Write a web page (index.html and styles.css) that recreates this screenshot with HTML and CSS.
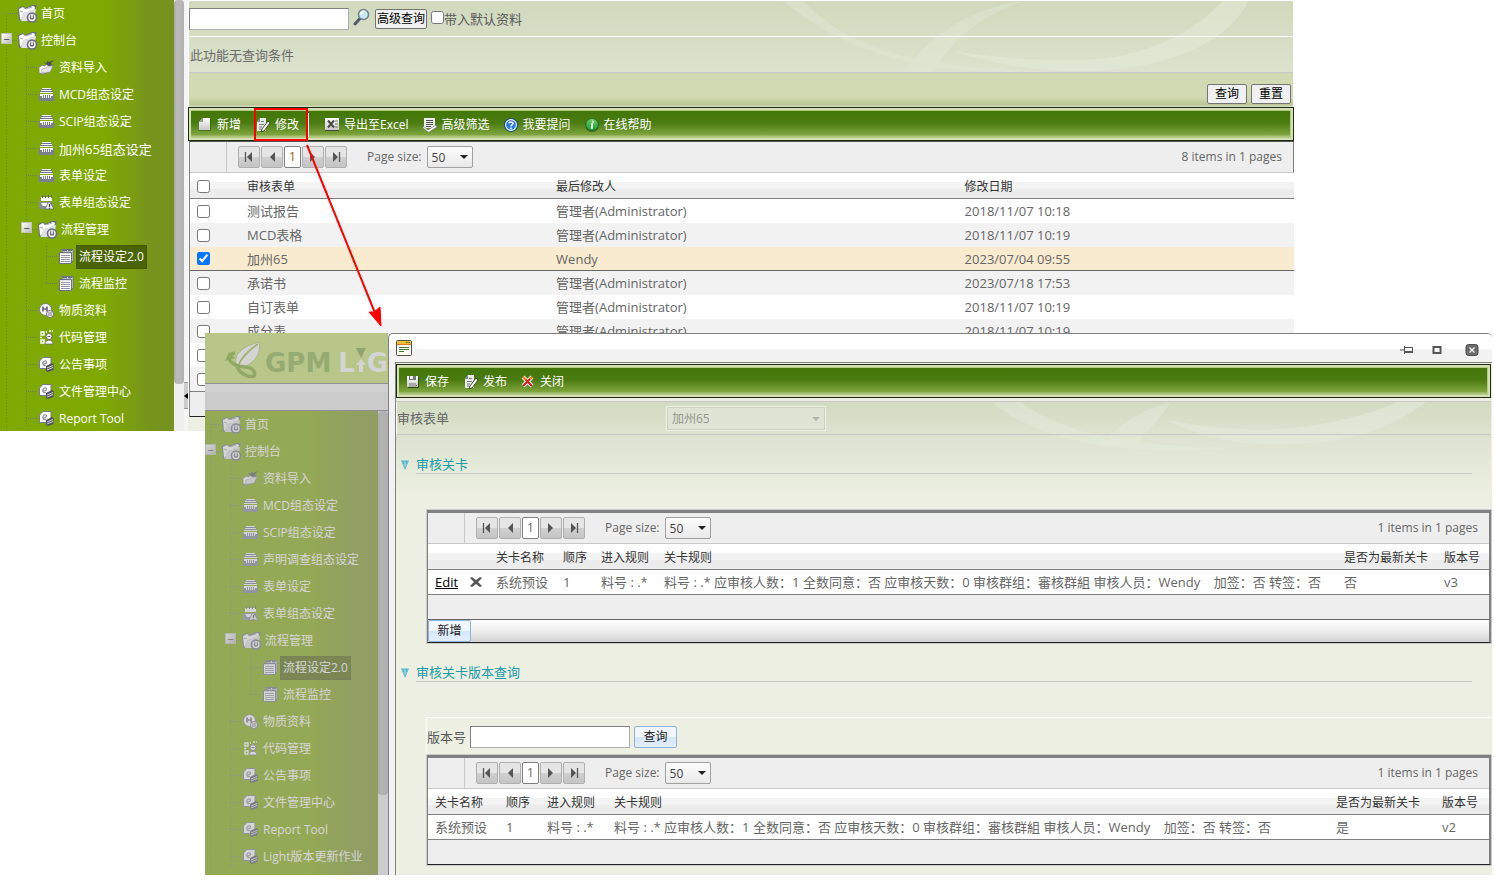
FILE: index.html
```html
<!DOCTYPE html>
<html lang="zh-CN">
<head>
<meta charset="utf-8">
<title>流程设定</title>
<link rel="stylesheet" href="styles.css">
</head>
<body>
<svg class="sprite" aria-hidden="true">
  <defs>
    <linearGradient id="silver" x1="0" y1="0" x2="0" y2="1"><stop offset="0" stop-color="#fff"/><stop offset="1" stop-color="#c9c9c9"/></linearGradient>
    <linearGradient id="blue" x1="0" y1="0" x2="0" y2="1"><stop offset="0" stop-color="#1d62c8"/><stop offset="1" stop-color="#2f8cf0"/></linearGradient>
    <linearGradient id="green" x1="0" y1="0" x2="0" y2="1"><stop offset="0" stop-color="#6fcf6a"/><stop offset="1" stop-color="#12a02a"/></linearGradient>
    <symbol id="i-folder" viewBox="0 0 20 18"><path d="M0 3l5-2 2 2 7-3h5l-2 6 1 9H3l-2 1z" fill="#6c7180"/><path d="M1 4l4-2 2 2 8-3 2 1-1 4-10 2-3 7-1-1z" fill="#fff"/><path d="M5 8l5-1 2-2 6-1-2 12-13 0z" fill="#dfe1e6"/><path d="M2 6l3 1M8 4l6-2" stroke="#a9adb8"/><circle cx="14" cy="12.500" r="5.300" fill="#6c6b80"/><circle cx="14" cy="12.500" r="3" fill="none" stroke="#fff" stroke-width="1.300"/><path d="M14 8.500v4.500" stroke="#6c6b80" stroke-width="3"/><path d="M14 9v4" stroke="#fff" stroke-width="1.500"/></symbol>
    <symbol id="i-import" viewBox="0 0 15 15"><path d="M0 7l4-2 1 1 4-2 1 2 4-1-3 7-8 2-3-1z" fill="#fff" stroke="#6d6f86" stroke-width=".8"/><path d="M3 9l4-1 1-1 6-1-3 6-9 1z" fill="#e4e6ea" stroke="#8a8d9e" stroke-width=".5"/><path d="M5 2l4 4 4-1-1-2 3-3-5 2-2-1v2z" fill="#4d4d60"/></symbol>
    <symbol id="i-drawer" viewBox="0 0 15 15"><path d="M3 1h9v1H3zM2 3h11v1H2zM1 5h13v1H1z" fill="#fff"/><path d="M2 2h11v1H2zM1 4h13v1H1z" fill="#6c7590"/><path d="M0 7h15v7H0z" fill="#7a8090"/><path d="M1 7h13v2h-2v2H3V9H1z" fill="#fff"/><path d="M4.500 8v3M6.500 8v3M8.500 8v3M10.500 8v3" stroke="#7a8090"/></symbol>
    <symbol id="i-formset" viewBox="0 0 15 15"><path d="M2 2h11v4H2z" fill="#fff"/><path d="M3.500 0v3M6.500 0v3M9.500 0v3M12.500 0v3" stroke="#5f6678"/><path d="M1 7h12l1 3v4H0V9z" fill="#868c9c"/><path d="M2 8h9v3H4z" fill="#fff"/><path d="M10 6l5 8H6z" fill="#eceef4" stroke="#666b80" stroke-width=".8"/><path d="M10.500 9v3M10.500 12.700v1" stroke="#444" stroke-width="1.200"/></symbol>
    <symbol id="i-form" viewBox="0 0 15 15"><path d="M2 .500h12v12h-2" fill="#eef0f3" stroke="#6c6f88"/><path d="M.500 3.500h12v11H.500z" fill="#fff" stroke="#6c6f88"/><path d="M1 3.500h11M3 1.500h10" stroke="#6c6f88" stroke-width="1.500" stroke-dasharray="5 1"/><path d="M2 6.500h9M2 8.500h9M2 10.500h9M2 12.500h9" stroke="#9297aa"/></symbol>
    <symbol id="i-matter" viewBox="0 0 15 15"><circle cx="6.500" cy="6.500" r="6" fill="#fff" stroke="#74798c"/><path d="M4 3.500v5M8 3.500v5M4 6H8" stroke="#6c6b80" stroke-width="1.700"/><circle cx="11" cy="11" r="3.500" fill="#fff" stroke="#6c6b80"/><path d="M9 10h4M9 12h4" stroke="#6c6b80"/></symbol>
    <symbol id="i-code" viewBox="0 0 15 15"><path d="M2 2h3v3H2zM2 10h3v3H2z" fill="none" stroke="#fff" stroke-width="1.400"/><path d="M7 2h1M10 1h4M1 7.500h3" stroke="#fff" stroke-width="1.500" stroke-dasharray="2 1"/><circle cx="10" cy="6.500" r="3" fill="#fff" stroke="#6c6b80"/><path d="M6 14c0-5 8-5 8 0z" fill="#fff" stroke="#6c6b80" stroke-width=".8"/><path d="M8.500 6.500h3" stroke="#6c6b80"/></symbol>
    <symbol id="i-doc" viewBox="0 0 15 15"><path d="M4 .5h8v11H.5V4z" fill="#fff" stroke="#777d94"/><path d="M4 7c5 0 4-4 1.500-3C3 5 3 9.500 7 8.500" fill="none" stroke="#9297a6" stroke-width="1.200"/><path d="M7 9l6-3 1.500 1v6l-6 2-1.500-1z" fill="#4f4f60"/><path d="M8 11l6-2.500M8 13l6-2.500" stroke="#e4e4ea" stroke-width=".9"/></symbol>
    <symbol id="i-new" viewBox="0 0 14 14"><path d="M5 1h8v12H1V5z" fill="#2b4d08" opacity=".5"/><path d="M5 0h7v12H1V4z" fill="url(#silver)"/><path d="M5 0v4H1z" fill="#999"/></symbol>
    <symbol id="i-edit" viewBox="0 0 14 14"><path d="M4 0h6v13H1V4z" fill="#e9e9e9"/><path d="M4 0v4H1z" fill="#888"/><path d="M5 3.500h3M3 6.500h5M3 9h3M3 11h2" stroke="#777"/><path d="M12 3l2 2-6 8-3 1 1-3z" fill="#fff" stroke="#294409" stroke-width=".9"/></symbol>
    <symbol id="i-excel" viewBox="0 0 14 14"><path d="M0 1h14v12H0z" fill="#3f4a35"/><path d="M0 0h14v12H0z" fill="url(#silver)"/><path d="M3 2.500l6 7M9 2.500l-6 7" stroke="#4a4a4a" stroke-width="2"/><path d="M10 3h3M10 6h3M10 9h3" stroke="#777"/></symbol>
    <symbol id="i-filter" viewBox="0 0 14 14"><path d="M1 0h11v10H1z" fill="#eee"/><path d="M3 2.500h7M3 4.500h7M3 6.500h7M3 8.500h5" stroke="#4d554a"/><path d="M0 8l5 4 8-5 1 2-8 5H5L0 10z" fill="#fff" stroke="#555" stroke-width=".5"/></symbol>
    <symbol id="i-ask" viewBox="0 0 14 14"><circle cx="7" cy="7" r="7" fill="#164b86"/><circle cx="7" cy="7" r="5.400" fill="url(#blue)" stroke="#fff" stroke-width="1.100"/><path d="M5 5.500C5 3.500 9 3.500 9 5.500 9 7 7 6.800 7 8.500M7 9.500V11" fill="none" stroke="#fff" stroke-width="1.500"/></symbol>
    <symbol id="i-info" viewBox="0 0 14 14"><circle cx="7" cy="7" r="7" fill="#2d6b20"/><circle cx="7" cy="6.500" r="5.800" fill="url(#green)"/><path d="M6 6h1.500L6.500 10H8" fill="none" stroke="#fff" stroke-width="1.500"/><circle cx="8" cy="3.700" r="1" fill="#fff"/></symbol>
    <symbol id="i-save" viewBox="0 0 14 14"><path d="M2 2h11v11H2z" fill="#2c4b0b"/><path d="M1 1h11v11H1z" fill="url(#silver)"/><path d="M3 1h7v4H3z" fill="#777"/><path d="M4 1h3v3H4z" fill="#eee"/><path d="M3 8h7v4H3z" fill="#aaa"/><path d="M10 10h1v1h-1z" fill="#555"/></symbol>
    <symbol id="i-close" viewBox="0 0 14 14"><path d="M2 2l9 9M11 2l-9 9" stroke="#fff" stroke-width="4"/><path d="M2 2l9 9M11 2l-9 9" stroke="#d42222" stroke-width="2.200"/><path d="M2 2l3 3M11 2l-2 2" stroke="#f08a1c" stroke-width="2"/></symbol>
    <symbol id="i-search" viewBox="0 0 18 18"><path d="M7 10.500L2 16" stroke="#555b66" stroke-width="3" stroke-linecap="round"/><circle cx="10.500" cy="6.500" r="5" fill="#cbe6f5" stroke="#70808e" stroke-width="1.500"/><path d="M7.500 6a3 3 0 0 1 4-2.500" stroke="#fff" stroke-width="1.500" fill="none"/></symbol>
    <symbol id="i-first" viewBox="0 0 10 10"><path d="M1.500 0v10" stroke="#555" stroke-width="1.300"/><path d="M8 0v10L3 5z" fill="#555"/></symbol>
    <symbol id="i-prev" viewBox="0 0 10 10"><path d="M8 0v10L3 5z" fill="#555"/></symbol>
    <symbol id="i-next" viewBox="0 0 10 10"><path d="M2 0v10l5-5z" fill="#555"/></symbol>
    <symbol id="i-last" viewBox="0 0 10 10"><path d="M8.500 0v10" stroke="#555" stroke-width="1.300"/><path d="M2 0v10l5-5z" fill="#555"/></symbol>
    <symbol id="i-caret" viewBox="0 0 8 10"><path d="M0 .5h8L4 10z" fill="#5bb5c8"/><path d="M1.500 1.500h5L4 8z" fill="#c4eef2"/><path d="M4 1v7M2.500 1v3M5.500 1v3" stroke="#3aa6bd" stroke-width=".8"/></symbol>
    <symbol id="i-window" viewBox="0 0 16 16"><rect x=".5" y=".5" width="15" height="15" rx="1" fill="#fdfdf6" stroke="#5c5148"/><path d="M1 1h14v4H1z" fill="#f3bd3c"/><path d="M1 4.500h14" stroke="#d97b22"/><path d="M10 2.500h1.500M12.500 2.500H14" stroke="#3c6c1d"/><path d="M3 7.500h10M3 9.500h10M3 11.500h5" stroke="#3f7a3c"/></symbol>
    <symbol id="i-pin" viewBox="0 0 14 12"><path d="M0 6h4M4.500 2v8M5 3.500h7.500V8" stroke="#555" fill="none"/><path d="M5 7h8v2H5z" fill="#555"/></symbol>
    <symbol id="i-max" viewBox="0 0 14 12"><path d="M3.500 3h7v6h-7z" fill="#fff" stroke="#555" stroke-width="2"/></symbol>
    <symbol id="i-quit" viewBox="0 0 14 12"><rect x="1" y=".5" width="12" height="11" rx="2.500" fill="#6c6c6c" stroke="#4d4d4d"/><path d="M4.500 3.500l5 5M9.500 3.500l-5 5" stroke="#fff" stroke-width="1.200"/></symbol>
    <symbol id="i-del" viewBox="0 0 12 12"><path d="M0 2l2-1 4 3 4-3 2 1-4 4 4 4-2 1-4-3-4 3-2-1 4-4z" fill="#555"/></symbol>
  </defs>
</svg>

<div class="stage">
  <div class="app">
    <nav class="side" aria-label="功能目录">
      <ul class="tree">
        <li><a class="row root" href="#"><i class="line"></i><svg class="ico-l"><use href="#i-folder"/></svg><span>首页</span></a></li>
        <li>
          <div class="row root"><button class="fold" aria-label="收合">−</button><i class="line short"></i><svg class="ico-l"><use href="#i-folder"/></svg><span>控制台</span></div>
          <ul>
            <li><a class="row" href="#"><i class="line"></i><svg class="ico"><use href="#i-import"/></svg><span>资料导入</span></a></li>
            <li><a class="row" href="#"><i class="line"></i><svg class="ico"><use href="#i-drawer"/></svg><span>MCD组态设定</span></a></li>
            <li><a class="row" href="#"><i class="line"></i><svg class="ico"><use href="#i-drawer"/></svg><span>SCIP组态设定</span></a></li>
            <li><a class="row wide" href="#"><i class="line"></i><svg class="ico"><use href="#i-drawer"/></svg><span>加州65组态设定</span></a></li>
            <li><a class="row" href="#"><i class="line"></i><svg class="ico"><use href="#i-drawer"/></svg><span>表单设定</span></a></li>
            <li><a class="row" href="#"><i class="line"></i><svg class="ico"><use href="#i-formset"/></svg><span>表单组态设定</span></a></li>
            <li>
              <div class="row root"><button class="fold" aria-label="收合">−</button><i class="line short"></i><svg class="ico-l"><use href="#i-folder"/></svg><span>流程管理</span></div>
              <ul class="last">
                <li><a class="row current" href="#"><i class="line"></i><svg class="ico"><use href="#i-form"/></svg><span>流程设定2.0</span></a></li>
                <li><a class="row" href="#"><i class="line"></i><svg class="ico"><use href="#i-form"/></svg><span>流程监控</span></a></li>
              </ul>
            </li>
            <li><a class="row" href="#"><i class="line"></i><svg class="ico"><use href="#i-matter"/></svg><span>物质资料</span></a></li>
            <li><a class="row" href="#"><i class="line"></i><svg class="ico"><use href="#i-code"/></svg><span>代码管理</span></a></li>
            <li><a class="row" href="#"><i class="line"></i><svg class="ico"><use href="#i-doc"/></svg><span>公告事项</span></a></li>
            <li><a class="row" href="#"><i class="line"></i><svg class="ico"><use href="#i-doc"/></svg><span>文件管理中心</span></a></li>
            <li><a class="row" href="#"><i class="line"></i><svg class="ico"><use href="#i-doc"/></svg><span>Report Tool</span></a></li>
          </ul>
        </li>
      </ul>
      <div class="scroll"><div class="thumb"></div></div>
    </nav>
    <div class="split"><div class="grip"></div></div>

    <main class="main">
      <div class="search">
        <div class="bar quick">
          <input class="text" type="text" aria-label="关键字">
          <svg class="glass"><use href="#i-search"/></svg>
          <button class="btn">高级查询</button>
          <label class="check"><input type="checkbox">带入默认资料</label>
        </div>
        <div class="bar note">此功能无查询条件</div>
      </div>
      <div class="bar actions"><button class="btn">查询</button><button class="btn">重置</button></div>
      <div class="toolbar"><div class="tools">
        <button><svg><use href="#i-new"/></svg>新增</button>
        <button class="second"><svg><use href="#i-edit"/></svg>修改</button>
        <i class="sep"></i>
        <button><svg><use href="#i-excel"/></svg>导出至Excel</button>
        <button><svg><use href="#i-filter"/></svg>高级筛选</button>
        <button><svg><use href="#i-ask"/></svg>我要提问</button>
        <button><svg><use href="#i-info"/></svg>在线帮助</button>
      </div></div>
      <section class="grid base">
        <div class="pager">
          <button class="pg" aria-label="第一页"><svg><use href="#i-first"/></svg></button>
          <button class="pg" aria-label="上一页"><svg><use href="#i-prev"/></svg></button>
          <button class="pg now hot">1</button>
          <button class="pg" aria-label="下一页"><svg><use href="#i-next"/></svg></button>
          <button class="pg" aria-label="最后一页"><svg><use href="#i-last"/></svg></button>
          <label for="size-a">Page size:</label><select id="size-a" class="size"><option>50</option></select>
          <span class="total">8 items in 1 pages</span>
        </div>
        <table>
          <colgroup><col class="c-check"><col class="c-form"><col class="c-user"><col></colgroup>
          <thead><tr><th><input type="checkbox" aria-label="全选"></th><th>审核表单</th><th>最后修改人</th><th>修改日期</th></tr></thead>
          <tbody>
            <tr><td><input type="checkbox" aria-label="测试报告"></td><td>测试报告</td><td>管理者(Administrator)</td><td>2018/11/07 10:18</td></tr>
            <tr><td><input type="checkbox" aria-label="MCD表格"></td><td>MCD表格</td><td>管理者(Administrator)</td><td>2018/11/07 10:19</td></tr>
            <tr class="picked"><td><input type="checkbox" aria-label="加州65" checked></td><td>加州65</td><td>Wendy</td><td>2023/07/04 09:55</td></tr>
            <tr><td><input type="checkbox" aria-label="承诺书"></td><td>承诺书</td><td>管理者(Administrator)</td><td>2023/07/18 17:53</td></tr>
            <tr><td><input type="checkbox" aria-label="自订表单"></td><td>自订表单</td><td>管理者(Administrator)</td><td>2018/11/07 10:19</td></tr>
            <tr><td><input type="checkbox" aria-label="成分表"></td><td>成分表</td><td>管理者(Administrator)</td><td>2018/11/07 10:19</td></tr>
            <tr><td><input type="checkbox" aria-label="第七笔"></td><td></td><td></td><td></td></tr>
            <tr><td><input type="checkbox" aria-label="第八笔"></td><td></td><td></td><td></td></tr>
          </tbody>
        </table>
        <div class="foot"></div>
      </section>
    </main>
  </div>

  <div class="front">
    <div class="dimmed">
      <div class="brand">
        <svg class="leaf" viewBox="0 0 36 40"><path d="M11 24C9 12 20 6 34 2c2 10-2 19-15 25" fill="#fff" stroke="#a9c45a"/><path d="M13 26C17 16 24 10 33 4" stroke="#9bbb3c" fill="none" stroke-width="2"/><path d="M10 13C3 14 2 20 9 24c3 3 7 2 11 3 8 0 11 6 9 9-4 2-14-2-17-9" fill="none" stroke="#7ba821" stroke-width="3.500"/><path d="M0 21l4-9 6 6z" fill="#7ba821"/></svg>
        <span class="gpm">GPM</span><span class="lite">L</span><svg class="arrows" viewBox="0 0 12 28"><path d="M1 0h10L6 10z" fill="#789c30"/><path d="M6 11l5 6H8v7H4v-7H1z" fill="#fff"/></svg><span class="lite">G</span>
      </div>
      <div class="strip"></div>
      <nav class="side" aria-label="目录">
        <ul class="tree">
          <li><a class="row root" href="#"><i class="line"></i><svg class="ico-l"><use href="#i-folder"/></svg><span>首页</span></a></li>
          <li>
            <div class="row root"><button class="fold" aria-label="收合">−</button><i class="line short"></i><svg class="ico-l"><use href="#i-folder"/></svg><span>控制台</span></div>
            <ul>
              <li><a class="row" href="#"><i class="line"></i><svg class="ico"><use href="#i-import"/></svg><span>资料导入</span></a></li>
              <li><a class="row" href="#"><i class="line"></i><svg class="ico"><use href="#i-drawer"/></svg><span>MCD组态设定</span></a></li>
              <li><a class="row" href="#"><i class="line"></i><svg class="ico"><use href="#i-drawer"/></svg><span>SCIP组态设定</span></a></li>
              <li><a class="row" href="#"><i class="line"></i><svg class="ico"><use href="#i-drawer"/></svg><span>声明调查组态设定</span></a></li>
              <li><a class="row" href="#"><i class="line"></i><svg class="ico"><use href="#i-drawer"/></svg><span>表单设定</span></a></li>
              <li><a class="row" href="#"><i class="line"></i><svg class="ico"><use href="#i-formset"/></svg><span>表单组态设定</span></a></li>
              <li>
                <div class="row root"><button class="fold" aria-label="收合">−</button><i class="line short"></i><svg class="ico-l"><use href="#i-folder"/></svg><span>流程管理</span></div>
                <ul class="last">
                  <li><a class="row current" href="#"><i class="line"></i><svg class="ico"><use href="#i-form"/></svg><span>流程设定2.0</span></a></li>
                  <li><a class="row" href="#"><i class="line"></i><svg class="ico"><use href="#i-form"/></svg><span>流程监控</span></a></li>
                </ul>
              </li>
              <li><a class="row" href="#"><i class="line"></i><svg class="ico"><use href="#i-matter"/></svg><span>物质资料</span></a></li>
              <li><a class="row" href="#"><i class="line"></i><svg class="ico"><use href="#i-code"/></svg><span>代码管理</span></a></li>
              <li><a class="row" href="#"><i class="line"></i><svg class="ico"><use href="#i-doc"/></svg><span>公告事项</span></a></li>
              <li><a class="row" href="#"><i class="line"></i><svg class="ico"><use href="#i-doc"/></svg><span>文件管理中心</span></a></li>
              <li><a class="row" href="#"><i class="line"></i><svg class="ico"><use href="#i-doc"/></svg><span>Report Tool</span></a></li>
              <li><a class="row" href="#"><i class="line"></i><svg class="ico"><use href="#i-doc"/></svg><span>Light版本更新作业</span></a></li>
            </ul>
          </li>
        </ul>
        <div class="scroll"><div class="thumb"></div></div>
      </nav>
    </div>

    <div class="dialog" role="dialog" aria-label="流程设定">
      <div class="title">
        <svg class="mark"><use href="#i-window"/></svg>
        <button aria-label="固定"><svg><use href="#i-pin"/></svg></button>
        <button aria-label="最大化"><svg><use href="#i-max"/></svg></button>
        <button aria-label="关闭"><svg><use href="#i-quit"/></svg></button>
      </div>
      <div class="body">
        <div class="toolbar"><div class="tools">
          <button><svg><use href="#i-save"/></svg>保存</button>
          <button class="second"><svg><use href="#i-edit"/></svg>发布</button>
          <button><svg><use href="#i-close"/></svg>关闭</button>
        </div></div>
        <div class="sheet">
          <div class="field"><label for="form">审核表单</label><select id="form" disabled><option>加州65</option></select></div>
          <section class="part">
            <h2><svg><use href="#i-caret"/></svg><span>审核关卡</span></h2>
            <div class="grid boxed">
              <div class="pager">
                <button class="pg" aria-label="第一页"><svg><use href="#i-first"/></svg></button>
                <button class="pg" aria-label="上一页"><svg><use href="#i-prev"/></svg></button>
                <button class="pg now">1</button>
                <button class="pg" aria-label="下一页"><svg><use href="#i-next"/></svg></button>
                <button class="pg" aria-label="最后一页"><svg><use href="#i-last"/></svg></button>
                <label for="size-b">Page size:</label><select id="size-b" class="size"><option>50</option></select>
                <span class="total">1 items in 1 pages</span>
              </div>
              <table>
                <colgroup><col class="w35"><col class="w26"><col class="w67"><col class="w38"><col class="w63"><col><col class="w100"><col class="w52"></colgroup>
                <thead><tr><th></th><th></th><th>关卡名称</th><th>顺序</th><th>进入规则</th><th>关卡规则</th><th>是否为最新关卡</th><th>版本号</th></tr></thead>
                <tbody><tr><td><a href="#">Edit</a></td><td><button class="del" aria-label="删除"><svg><use href="#i-del"/></svg></button></td><td>系统预设</td><td>1</td><td>料号 : .*</td><td>料号 : .* 应审核人数：1 全数同意：否 应审核天数：0 审核群组：審核群組 审核人员：Wendy &nbsp;&nbsp; 加签：否 转签：否</td><td>否</td><td>v3</td></tr></tbody>
              </table>
              <div class="foot"></div>
              <div class="command"><button class="soft">新增</button></div>
            </div>
          </section>
          <section class="part">
            <h2><svg><use href="#i-caret"/></svg><span>审核关卡版本查询</span></h2>
            <div class="query"><label for="ver">版本号</label><input id="ver" class="text" type="text"><button class="soft">查询</button></div>
            <div class="grid boxed">
              <div class="pager">
                <button class="pg" aria-label="第一页"><svg><use href="#i-first"/></svg></button>
                <button class="pg" aria-label="上一页"><svg><use href="#i-prev"/></svg></button>
                <button class="pg now">1</button>
                <button class="pg" aria-label="下一页"><svg><use href="#i-next"/></svg></button>
                <button class="pg" aria-label="最后一页"><svg><use href="#i-last"/></svg></button>
                <label for="size-c">Page size:</label><select id="size-c" class="size"><option>50</option></select>
                <span class="total">1 items in 1 pages</span>
              </div>
              <table>
                <colgroup><col class="w71"><col class="w41"><col class="w67"><col><col class="w106"><col class="w54"></colgroup>
                <thead><tr><th>关卡名称</th><th>顺序</th><th>进入规则</th><th>关卡规则</th><th>是否为最新关卡</th><th>版本号</th></tr></thead>
                <tbody><tr><td>系统预设</td><td>1</td><td>料号 : .*</td><td>料号 : .* 应审核人数：1 全数同意：否 应审核天数：0 审核群组：審核群組 审核人员：Wendy &nbsp;&nbsp; 加签：否 转签：否</td><td>是</td><td>v2</td></tr></tbody>
              </table>
              <div class="foot end"></div>
            </div>
          </section>
        </div>
      </div>
    </div>
  </div>

  <svg class="pointer" viewBox="0 0 140 230" aria-hidden="true"><rect x="5" y="9" width="52" height="31" fill="none" stroke="#f00" stroke-width="2"/><path d="M57 45l68 168" stroke="#f00" stroke-width="2"/><path d="M131 226l-12-14 5 0 6-5z" fill="#f00" stroke="#f00"/></svg>
</div>
</body>
</html>
```
FILE: styles.css
```css
* { box-sizing: border-box; }
body, button, input, select { font-family: "Open Sans", "Noto Sans CJK SC", sans-serif; }
body { margin: 0; background: #fff; color: #5a5a5a; font-size: 13px; line-height: 16px; }
button { cursor: pointer; margin: 0; padding: 0; border: 0; background: none; font-size: 12px; line-height: 16px; color: inherit; }
a { color: inherit; }
ul { margin: 0; padding: 0; list-style: none; }
svg { display: block; flex: none; }
.sprite { position: absolute; width: 0; height: 0; }

.stage { display: grid; position: relative; align-items: start; }
.stage > .app, .stage > .front { grid-area: 1 / 1; min-width: 0; }
.app { display: flex; height: 431px; padding-right: 200px; }

/* navigation tree */
.side { flex: none; width: 184px; display: flex; overflow: hidden; background: #efefef; }
.tree { flex: 1; background: repeating-linear-gradient(to bottom, #6f8048 0 1px, transparent 1px 3px) 6px 13px / 1px 100% no-repeat, linear-gradient(to right, #7fa800 0 105px, #7b9d12 130px, #76941c 150px, #76921f); }
.tree ul { margin-left: 20px; background: repeating-linear-gradient(to bottom, #6f7c62 0 1px, transparent 1px 3px) 6px 0 / 1px 100% no-repeat; }
.tree ul.last { background-size: 1px 41px; }
.row { display: flex; align-items: center; height: 27px; padding-left: 6px; font-size: 12px; color: #fff; text-decoration: none; white-space: nowrap; }
.row .line { flex: none; width: 11px; border-top: 1px dotted #6f7c62; }
.row .line.short { width: 5px; }
.row .ico { width: 15px; height: 15px; margin: 0 2px; }
.row .ico-l { width: 20px; height: 18px; margin-left: 1px; }
.row span { padding: 4px 3px; }
.row.wide span { font-size: 13px; }
.row.current span { background: #4a6500; outline: 1px solid #435a05; outline-offset: -1px; }
.fold { width: 11px; height: 11px; margin-left: -5px; margin-top: -4px; background: linear-gradient(135deg, #fff, #bbb); border: 1px solid #c2c2b8; font-size: 11px; line-height: 8px; color: #333; }
.scroll { width: 10px; background: #efefef; }
.thumb { height: 384px; background: linear-gradient(to right, #a9a9a9, #bcbcbc 30%, #b2b2b2); border-radius: 4px; }
.split { flex: none; width: 4px; display: flex; flex-direction: column; justify-content: flex-end; padding-bottom: 22px; background: #f5f5f5; }
.grip { height: 27px; background: #ccc; border: solid #999; border-width: 1px 0; display: flex; align-items: center; }
.grip::before { content: ""; border: 3px solid transparent; border-left: 0; border-right: 4px solid #000; }

/* query panels */
.main { flex: 1; min-width: 0; padding-top: 1px; background: linear-gradient(#fff, #fff) 0 0 / 100% 416px no-repeat #ecefe2; }
.search { margin: 0 1px; background: url("data:image/svg+xml,%3Csvg xmlns='http://www.w3.org/2000/svg' width='520' height='72'%3E%3Cg fill='%23e3ead8' opacity='.6'%3E%3Cpath d='M475 0C455 45 380 74 290 70 250 68 210 60 180 50 250 60 300 62 340 56 400 46 430 20 450 0z'/%3E%3Cpath d='M130 72C160 30 200 8 250 0 210 14 180 36 160 72zM30 0C80 50 140 66 270 70 150 76 70 50 10 0z' opacity='.7'/%3E%3C/g%3E%3C/svg%3E") right top no-repeat, linear-gradient(#d0d9bd, #dce2cd); }
.bar { display: flex; align-items: center; height: 36px; }
.quick { border-bottom: 1px solid #fff; gap: 4px; }
.note { border-bottom: 1px solid #c8c8c8; padding-left: 1px; color: #6c6c6c; }
.actions { height: 34px; margin: 0 1px; padding: 7px 2px 0; justify-content: flex-end; gap: 4px; background: linear-gradient(#d2dab4 0 24px, #b9c692 32px, #d3dbc0 33px); }
.text { width: 160px; height: 22px; padding: 0 3px; background: #fff; border: 1px solid; border-color: #808080 #b0b0b0 #b0b0b0 #808080; font-size: 13px; }
.glass { width: 18px; height: 18px; margin-top: -4px; }
.btn { min-width: 40px; height: 20px; padding: 0 1px; background: #f0f0f0; border: 1px solid #757575; border-radius: 2px; color: #000; }
.check { display: flex; align-items: center; }
.check input { margin: 0 0 2px; }

/* green toolbar */
.toolbar { height: 34px; padding: 2px; background: #d6e0b8; border: 1px solid #1e2b10; }
.tools { height: 100%; padding-top: 1px; display: flex; align-items: center; border: 1px solid #b4c97c; border-left: 0; background: linear-gradient(#43770a, #4a7b10 45%, #7da33c 90%, #b7cb8d); color: #fff; }
.tools button { display: flex; align-items: center; gap: 5px; height: 24px; padding: 0 7px; white-space: nowrap; }
.tools svg { width: 14px; height: 14px; }
.tools .second { margin-left: 1px; }
.sep { width: 1px; height: 24px; margin: 0 9px 0 2px; background: #fff; }

/* grids */
.pager { display: flex; align-items: center; gap: 1px; height: 31px; padding: 0 11px 0 48px; border-bottom: 1px solid #c8c8c8; background: linear-gradient(#c8c8c8, #c8c8c8) 36px 0 / 1px 100% no-repeat #eee; color: #666; font-size: 12px; white-space: nowrap; }
.pg { width: 22px; height: 22px; display: flex; align-items: center; justify-content: center; background: linear-gradient(#e5e5e5 50%, #d0d0d0 50%, #c4c4c4); border: 1px solid #b0b0b0; border-radius: 2px; }
.pg svg { width: 10px; height: 10px; }
.pg.now { width: 17px; background: #fff; border-color: #808080; }
.pg.hot { color: #9a5b00; }
.pager label { margin-left: 19px; margin-right: 4px; }
.size { appearance: none; width: 46px; height: 22px; padding: 0 0 0 4px; border: 1px solid #a0a0a0; border-radius: 2px; background: url("data:image/svg+xml,%3Csvg xmlns='http://www.w3.org/2000/svg' width='8' height='4'%3E%3Cpath d='M0 0h8L4 4z' fill='%23222'/%3E%3C/svg%3E") 32px 8px no-repeat, linear-gradient(#fcfcfc, #e9e9e9); color: #444; font-size: 12px; }
.total { margin-left: auto; }
.grid table { width: 100%; table-layout: fixed; border-collapse: separate; border-spacing: 0; background: #fff; }
.grid th { height: 26px; padding: 2px 0 0 7px; text-align: left; font-size: 12px; font-weight: 400; color: #333; border-bottom: 1px solid #808080; background: linear-gradient(#fff 35%, #f3f3f3 35% 65%, #ececec 65%); white-space: nowrap; }
.grid td { height: 24px; padding: 0 0 0 7px; line-height: 16px; color: #666; white-space: nowrap; }
.grid td a { color: #000; }
.base { margin: 0 0 0 1px; border-top: 1px solid #555; border-left: 1px solid #808080; }
.base .pager { border-right: 1px solid #808080; }
.base input { display: block; margin: 0; }
.base tbody tr:nth-child(even) { background: #f2f2f2; }
.base tbody tr.picked { background: #f9ebcf; }
.base tbody tr.picked td { border-bottom: 1px solid #666; }
.base .foot { height: 26px; background: #eee; border-top: 1px solid #808080; border-bottom: 1px solid #222; }
.c-check { width: 50px; }
.c-form { width: 28%; }
.c-user { width: 37%; }

/* foreground window */
.front { margin: 333px 2px 7px 205px; display: flex; height: 542px; overflow: hidden; }
.dimmed { flex: none; width: 183px; position: relative; display: flex; flex-direction: column; overflow: hidden; }
.dimmed::after { content: ""; position: absolute; inset: 0; background: rgba(170, 170, 170, .5); }
.dimmed .side { flex: 1; min-height: 0; margin-left: -1px; }
.brand { height: 51px; padding: 7px 0 0 20px; display: flex; background: #c6e268; border-bottom: 1px solid #777; font: bold 26px/46px "DejaVu Sans", sans-serif; }
.leaf { width: 36px; height: 40px; }
.gpm { margin-left: 4px; color: #83ac3a; }
.lite { margin-left: 7px; color: #fff; }
.arrows { width: 12px; height: 28px; margin-top: 8px; }
.arrows + .lite { margin-left: 0; }
.strip { height: 27px; background: linear-gradient(#f8f8f8 8px, #ececec 8px); border-bottom: 1px solid #777; }
.dialog { flex: 1; min-width: 0; padding-left: 6px; background: #f2f2f2; border: solid #808080; border-width: 1px 0 0 1px; border-radius: 5px 5px 0 0; }
.title { height: 28px; margin-left: -6px; padding: 3px 13px 0 7px; display: flex; align-items: center; gap: 18px; border-radius: 5px 5px 0 0; background: linear-gradient(#fff 15px, #f2f2f2 15px); }
.title .mark { width: 16px; height: 16px; margin-right: auto; margin-top: -4px; }
.title button svg { width: 14px; height: 12px; }
.title button:nth-of-type(2) { margin-left: -2px; }
.title button:nth-of-type(3) { margin-left: 3px; }
.body { height: 514px; padding: 1px 1px 0 0; border: solid #808080; border-width: 1px 0 0 1px; background: #ecefe2; }
.sheet { margin-top: 3px; height: 477px; border-top: 1px solid #c8c8c8; background: url("data:image/svg+xml,%3Csvg xmlns='http://www.w3.org/2000/svg' width='520' height='60'%3E%3Cg fill='%23e6ecdf' opacity='.55'%3E%3Cpath d='M455 0C410 34 360 44 290 42 250 40 220 30 195 18 250 28 300 32 350 22 385 16 410 8 425 0z'/%3E%3Cpath d='M130 44C150 20 170 8 200 0 190 14 180 26 165 44zM50 0C90 30 150 44 260 46 150 54 70 40 20 0z' opacity='.7'/%3E%3C/g%3E%3C/svg%3E") right top no-repeat, linear-gradient(#d3dbc3, #dde3cf 35px, #e6ebdb 70px, #ecefe2 92px); }
.field { height: 33px; display: flex; align-items: center; border-bottom: 1px solid #c8c8c8; border-left: 1px solid #fff; }
.field label { width: 269px; color: #666; }
.field select { appearance: none; width: 160px; height: 25px; padding: 0 5px; border: 1px solid #edf0e4; box-shadow: inset 0 0 0 1px #cdd2c2; background: url("data:image/svg+xml,%3Csvg xmlns='http://www.w3.org/2000/svg' width='8' height='4'%3E%3Cpath d='M0 0h8L4 4z' fill='%23b4b8ac'/%3E%3C/svg%3E") 145px 10px no-repeat, #dfe4d5; color: #92968e; font-size: 12px; opacity: 1; }
.part h2 { margin: 20px 19px 0 5px; display: flex; align-items: center; gap: 7px; font-size: 13px; font-weight: 400; line-height: 18px; color: #1c9ba8; }
.part h2 svg { width: 8px; height: 10px; }
.part h2 span { flex: 1; border-bottom: 1px solid #c8c8c8; }
.boxed { margin: 36px 0 0 31px; border: solid #808080; border-width: 3px 2px 1px 1px; border-bottom-color: #222; outline: 1px solid #ccc; outline-offset: 0; }
.boxed tbody td { height: 25px; border-bottom: 1px solid #808080; }
.boxed .foot { height: 25px; background: #eee; border-bottom: 1px solid #666; }
.boxed .foot.end { height: 24px; border: 0; }
.command { height: 22px; background: linear-gradient(#fff, #eee 50%, #d4d4d4); }
.soft { width: 43px; height: 22px; border: 1px solid #8fb2dc; border-radius: 2px; background: linear-gradient(#f2f7ff 50%, #d4e5fa 50%, #e4effc); color: #222; }
.query { margin: 35px 0 0 30px; height: 37px; display: flex; align-items: center; gap: 4px; padding-top: 2px; border-top: 1px solid #fff; border-left: 1px solid #fff; }
.query + .boxed { margin-top: 1px; }
.del { display: block; }
.del svg { width: 12px; height: 12px; }
.w26 { width: 26px; }
.w35 { width: 35px; }
.w38 { width: 38px; }
.w41 { width: 41px; }
.w52 { width: 52px; }
.w54 { width: 54px; }
.w63 { width: 63px; }
.w67 { width: 67px; }
.w71 { width: 71px; }
.w100 { width: 100px; }
.w106 { width: 106px; }

/* callout drawn over both windows */
.pointer { position: absolute; left: 250px; top: 100px; width: 140px; height: 230px; pointer-events: none; }
```
